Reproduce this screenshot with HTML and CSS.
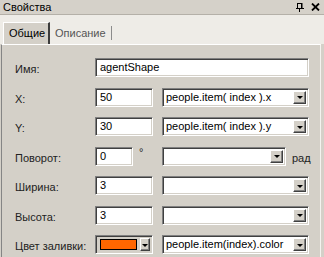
FILE: index.html
```html
<!DOCTYPE html>
<html lang="ru">
<head>
  <meta charset="UTF-8">
  <title>Свойства</title>
  <link rel="stylesheet" href="styles.css">
</head>
<body>
  <div class="window">
    <!-- заголовок -->
    <div class="titlebar">
      <span class="title">Свойства</span>
      <span class="title-icons">
        <svg width="8" height="9" viewBox="0 0 8 9">
          <rect x="1.5" y="0.5" width="4" height="5" fill="none" stroke="#000"/>
          <rect x="5" y="0" width="1.5" height="6" fill="#000"/>
          <rect x="0" y="5" width="8" height="1" fill="#000"/>
          <rect x="3" y="6" width="1" height="3" fill="#000"/>
        </svg>
        <svg width="9" height="8" viewBox="0 0 9 8">
          <path d="M1 0.5 L8 7.5 M8 0.5 L1 7.5" stroke="#000" stroke-width="1.8"/>
        </svg>
      </span>
    </div>

    <!-- вкладки -->
    <div class="tabstrip">
      <div class="tab active">Общие</div>
      <div class="tab">Описание</div>
    </div>

    <!-- панель свойств -->
    <div class="panel">
      <div class="row">
        <span class="label">Имя:</span>
        <div class="field field-wide">agentShape</div>
      </div>
      <div class="row">
        <span class="label">X:</span>
        <div class="field field-short">50</div>
        <div class="combo">
          <span class="combo-text">people.item( index ).x</span>
          <span class="drop-btn"></span>
        </div>
      </div>
      <div class="row">
        <span class="label">Y:</span>
        <div class="field field-short">30</div>
        <div class="combo">
          <span class="combo-text">people.item( index ).y</span>
          <span class="drop-btn"></span>
        </div>
      </div>
      <div class="row">
        <span class="label">Поворот:</span>
        <div class="field field-tiny">0</div>
        <span class="degree">°</span>
        <div class="combo combo-narrow">
          <span class="combo-text"></span>
          <span class="drop-btn"></span>
        </div>
        <span class="unit">рад</span>
      </div>
      <div class="row">
        <span class="label">Ширина:</span>
        <div class="field field-short">3</div>
        <div class="combo">
          <span class="combo-text"></span>
          <span class="drop-btn"></span>
        </div>
      </div>
      <div class="row">
        <span class="label">Высота:</span>
        <div class="field field-short">3</div>
        <div class="combo">
          <span class="combo-text"></span>
          <span class="drop-btn"></span>
        </div>
      </div>
      <div class="row">
        <span class="label">Цвет заливки:</span>
        <div class="color-picker">
          <span class="swatch"></span>
          <span class="drop-btn drop-small"></span>
        </div>
        <div class="combo">
          <span class="combo-text">people.item(index).color</span>
          <span class="drop-btn"></span>
        </div>
      </div>
    </div>
  </div>
</body>
</html>
```

FILE: styles.css
```css
* {
  margin: 0;
  padding: 0;
  box-sizing: border-box;
}

body {
  font-family: 'Liberation Sans', Arial, sans-serif;
  font-size: 11px;
  color: #222;
  background-color: #d4d0c8;
}

.window {
  width: 324px;
  height: 257px;
  overflow: hidden;
  display: flex;
  flex-direction: column;
}

/* заголовок */
.titlebar {
  height: 15px;
  display: flex;
  align-items: center;
  justify-content: space-between;
  padding: 0 4px 0 3px;
  background-color: #d5d1c9;
  border-bottom: 1px solid #b4b0a8;
}

.title {
  line-height: 14px;
  color: #000;
}

.title-icons {
  display: flex;
  align-items: center;
  gap: 7px;
}

.title-icons svg {
  display: block;
}

/* вкладки */
.tabstrip {
  height: 29px;
  display: flex;
  align-items: flex-end;
  padding-left: 3px;
  background-color: #eeece7;
}

.tab {
  height: 22px;
  line-height: 20px;
  padding: 0 5px;
  color: #555;
}

.tab.active {
  width: 47px;
  margin-bottom: -1px;
  height: 23px;
  color: #000;
  background-color: #d4d0c8;
  border-left: 1px solid #fff;
  border-top: 1px solid #fff;
  border-right: 2px solid #3c3c3c;
}

.tab:not(.active) {
  height: 14px;
  line-height: 14px;
  margin-bottom: 4px;
  padding: 0 5px 0 5px;
  border-right: 1px solid #8c8c8c;
}

/* панель */
.panel {
  flex: 1;
  margin-left: 1px;
  margin-right: 3px;
  padding: 13px 0 0 13px;
  display: flex;
  flex-direction: column;
  gap: 10.5px;
  background-color: #d4d0c8;
  border-top: 1px solid #fff;
  border-left: 1px solid #858585;
  border-right: 1px solid #f4f3ef;
}

.row {
  height: 19px;
  display: flex;
  align-items: flex-end;
}

.label {
  width: 80px;
  line-height: 13px;
  padding-bottom: 1px;
  flex-shrink: 0;
}

.field,
.combo,
.color-picker {
  height: 19px;
  background-color: #fff;
  border: 1px solid;
  border-color: #808080 #fff #fff #808080;
  box-shadow: inset 1px 1px #404040, inset -1px -1px #d4d0c8;
  font-size: 11px;
  line-height: 17px;
  color: #000;
}

.field {
  padding-left: 4px;
}

.field-wide {
  width: 214px;
}

.field-short {
  width: 58px;
  margin-right: 9px;
}

.field-tiny {
  width: 38px;
}

.degree {
  width: 29px;
  align-self: flex-start;
  padding-left: 6px;
  line-height: 11px;
  font-size: 11px;
}

.combo {
  width: 147px;
  display: flex;
  align-items: center;
  padding: 2px 2px 2px 3px;
}

.combo-narrow {
  width: 124px;
}

.combo-text {
  flex: 1;
  white-space: nowrap;
  overflow: hidden;
  line-height: 15px;
}

.unit {
  padding-left: 6px;
  line-height: 13px;
  padding-bottom: 1px;
}

.drop-btn {
  width: 13px;
  height: 13px;
  display: flex;
  align-items: center;
  justify-content: center;
  background-color: #d4d0c8;
  border: 1px solid;
  border-color: #fff #404040 #404040 #fff;
  box-shadow: inset -1px -1px #808080;
}

.drop-btn::after {
  content: "";
  border-left: 3px solid transparent;
  border-right: 3px solid transparent;
  border-top: 3px solid #000;
  margin-top: 1px;
}

/* выбор цвета */
.color-picker {
  width: 58px;
  margin-right: 9px;
  display: flex;
  align-items: center;
  gap: 3px;
  padding: 2px 2px 2px 4px;
  background-color: #d4d0c8;
}

.swatch {
  width: 38px;
  height: 11px;
  background-color: #ff6600;
  border: 1px solid #000;
}

.drop-small {
  width: 10px;
}
```
